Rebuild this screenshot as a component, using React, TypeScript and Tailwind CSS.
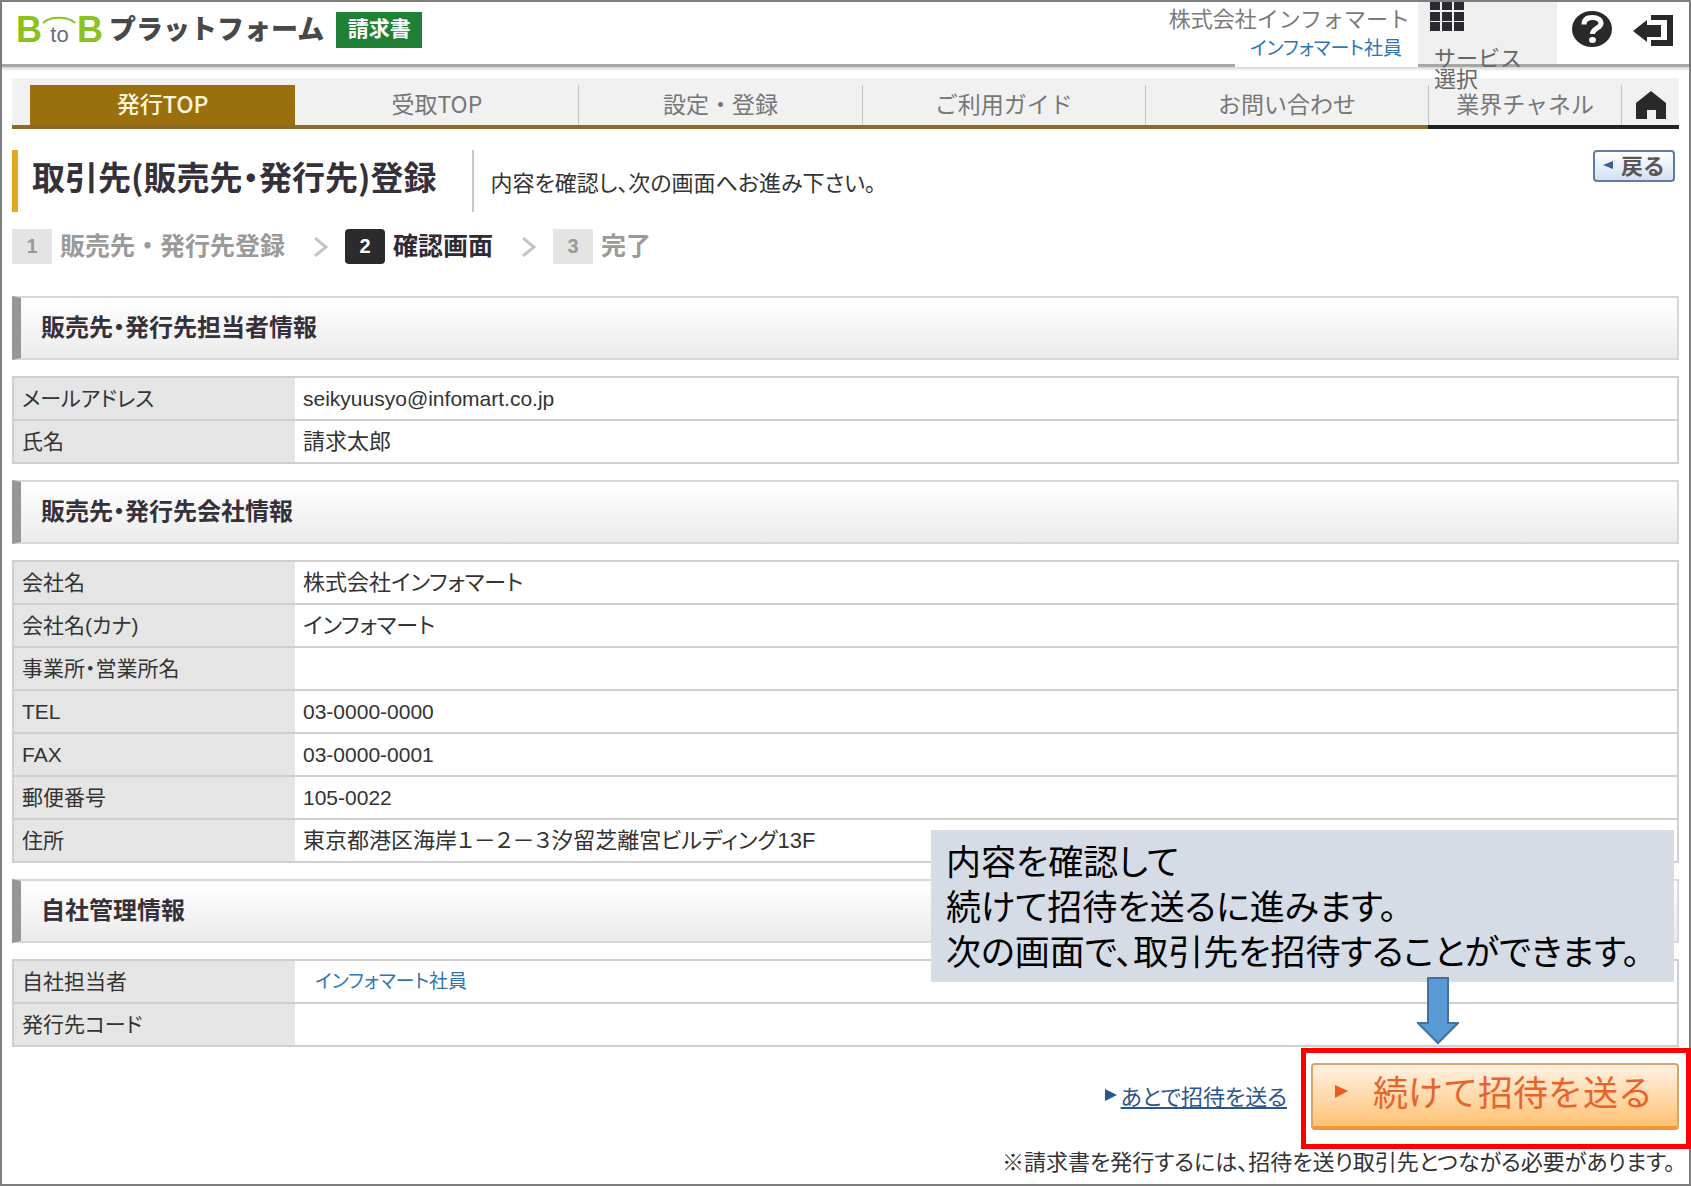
import type { ReactNode } from "react";
import clsx from "clsx";

interface Row {
  label: string;
  value: ReactNode;
}

const tabs = ["発行TOP", "受取TOP", "設定・登録", "ご利用ガイド", "お問い合わせ"];

const steps = ["販売先・発行先登録", "確認画面", "完了"];

const contactRows: Row[] = [
  { label: "メールアドレス", value: <span className="text-[21px]">seikyuusyo@infomart.co.jp</span> },
  { label: "氏名", value: "請求太郎" },
];

const companyRows: Row[] = [
  { label: "会社名", value: "株式会社インフォマート" },
  { label: "会社名(カナ)", value: "インフォマート" },
  { label: "事業所・営業所名", value: "" },
  { label: "TEL", value: <span className="text-[21px]">03-0000-0000</span> },
  { label: "FAX", value: <span className="text-[21px]">03-0000-0001</span> },
  { label: "郵便番号", value: <span className="text-[21px]">105-0022</span> },
  { label: "住所", value: "東京都港区海岸１－２－３汐留芝離宮ビルディング13F" },
];

const ownRows: Row[] = [
  {
    label: "自社担当者",
    value: <span className="pl-3 text-[19px] text-[#2e75b6]">インフォマート社員</span>,
  },
  { label: "発行先コード", value: "" },
];

function Logo() {
  return (
    <a href="#" className="flex items-start">
      <span className="relative mt-1 flex items-baseline font-['Liberation_Sans',sans-serif] leading-9">
        <span className="text-4xl leading-9 font-bold text-[#8cc220]">B</span>
        <span className="w-[35px] text-center text-[22px] leading-9 text-[#6f6a80]">to</span>
        <span className="text-4xl leading-9 font-bold text-[#8cc220]">B</span>
        <svg className="absolute top-0 left-6" width="38" height="14" viewBox="0 0 38 14" fill="none">
          <path d="M3 11C10 4 28 4 35 11" stroke="#8cc220" strokeWidth="2" />
        </svg>
      </span>
      <span className="ml-[6px] text-[27px] leading-10 font-black text-[#484848]">プラットフォーム</span>
      <span className="mt-1 ml-3 flex h-9 w-[86px] items-center justify-center bg-[#1f8036] pb-1 text-[21px] font-bold text-white">
        請求書
      </span>
    </a>
  );
}

function Header() {
  return (
    <header className="relative z-10 flex h-[65px] items-start border-b-[3px] border-[#a6a6a6] shadow-[0_2px_3px_rgba(0,0,0,0.18)]">
      <div className="pt-[6px] pl-[14px]">
        <Logo />
      </div>
      <div className="ml-auto flex flex-col items-end">
        <span className="pt-[3px] pr-2 text-[22px] leading-[24px] text-[#7a7a7a]">株式会社インフォマート</span>
        <span className="flex h-[38px] w-[183px] items-center justify-end bg-white pr-4 pb-[2px] text-[19px] text-[#2e75b6] [font-feature-settings:'palt']">
          インフォマート社員
        </span>
      </div>
      <a href="#" className="h-full w-[139px] bg-[#efefef] pl-3">
        <svg width="34" height="30" viewBox="0 0 34 30" fill="#2c2a30">
          {[0, 12, 24].map((x) =>
            [0, 10, 20].map((y) => <rect key={`${x}-${y}`} x={x} y={y} width="10" height={y === 0 ? 8 : 9} />)
          )}
        </svg>
        <span className="mt-[14px] block w-24 pl-1 text-[22px] leading-[21px] text-[#666]">
          サービス
          <br />
          選択
        </span>
      </a>
      <button type="button" aria-label="ヘルプ" className="mt-2 ml-[15px]">
        <svg width="40" height="38" viewBox="0 0 40 38" fill="none">
          <ellipse cx="20" cy="19" rx="20" ry="18" fill="#2a2828" />
          <path
            d="M12 14.500C12 10 15 7.500 20.500 7.500C26 7.500 29 10 29 13.500C29 18.500 20.500 18 20.500 24"
            stroke="#fff"
            strokeWidth="5"
          />
          <ellipse cx="20.500" cy="30" rx="3.500" ry="3" fill="#fff" />
        </svg>
      </button>
      <button type="button" aria-label="ログアウト" className="mt-3 mr-4 ml-[21px]">
        <svg width="40" height="34" viewBox="0 0 40 34" fill="#2a2828">
          <path d="M0 17L14 6V11H28V23H14V28Z" />
          <path d="M18 1H40V32H18V26H34V6H18Z" />
        </svg>
      </button>
    </header>
  );
}

function Nav() {
  return (
    <nav className="mx-[10px] mt-[11px] flex h-[51px] bg-[#f1f1f1] text-[23px] text-[#777]">
      {tabs.map((tab, i) => (
        <div key={tab} className="flex-1 border-b-4 border-[#8a6a24] pt-[7px]">
          <a
            href="#"
            className={clsx(
              "flex h-full items-center justify-center pb-[3px]",
              i === 0 && "ml-[18px] bg-[#99700d] font-medium text-[#fff6dc]",
              i > 1 && "border-l border-[#c4c4c4]"
            )}
          >
            {tab}
          </a>
        </div>
      ))}
      <div className="w-[193px] border-b-4 border-[#222] pt-[7px]">
        <a href="#" className="flex h-full items-center justify-center border-l border-[#c4c4c4] pb-[3px]">
          業界チャネル
        </a>
      </div>
      <div className="w-[58px] border-b-4 border-[#222] pt-[7px]">
        <a href="#" aria-label="ホーム" className="flex h-full items-center justify-center border-l border-[#c4c4c4]">
          <svg width="32" height="28" viewBox="0 0 32 28" fill="#2a2828">
            <path d="M16 0L31 12V28H21V19H12V28H1V12Z" />
          </svg>
        </a>
      </div>
    </nav>
  );
}

function Steps() {
  return (
    <ol className="mt-[17px] flex h-[35px] items-center text-[25px]">
      {steps.map((step, i) => (
        <li key={step} className="flex items-center">
          {i > 0 && (
            <svg className="mr-4 ml-7" width="16" height="20" viewBox="0 0 16 20" fill="none">
              <path d="M2 1L13 10L2 19" stroke="#c4c4c4" strokeWidth="3" />
            </svg>
          )}
          <span
            className={clsx(
              "mr-2 flex h-[35px] w-10 items-center justify-center pb-[2px] font-['Liberation_Sans',sans-serif] text-xl font-bold",
              i === 1 ? "rounded-sm bg-[#2c2a2c] text-white" : "bg-[#e4e4e4] text-[#999]"
            )}
          >
            {i + 1}
          </span>
          <span className={clsx("pb-[5px] leading-8 font-bold", i === 1 ? "text-[#2f2a35]" : "text-[#9a9a9a]")}>
            {step}
          </span>
        </li>
      ))}
    </ol>
  );
}

function Section({ title, rows }: { title: string; rows: Row[] }) {
  return (
    <section className="flex flex-col gap-4">
      <h2 className="flex h-16 items-center border-2 border-l-[9px] border-[#d8d8d8] border-l-[#969696] bg-linear-to-b from-white to-[#ebebeb] pb-1 pl-5 text-[24px] font-bold text-[#36303a] [font-feature-settings:'palt']">
        {title}
      </h2>
      <table className="w-full border-collapse border-2 border-[#cfcfcf] font-['Liberation_Sans','Noto_Sans_CJK_JP',sans-serif] text-[22px] leading-7 text-[#333] [font-feature-settings:'palt']">
        <tbody>
          {rows.map((row) => (
            <tr key={row.label} className="h-[43px] border-b-2 border-[#cfcfcf]">
              <th scope="row" className="w-[282px] bg-[#e5e5e5] pl-2 text-left text-[21px] font-normal">
                {row.label}
              </th>
              <td className="pl-2">{row.value}</td>
            </tr>
          ))}
        </tbody>
      </table>
    </section>
  );
}

function Callout() {
  return (
    <div className="absolute right-[5px] bottom-[65px] h-[152px] w-[743px] bg-[#d6dce5] pt-[7px] pl-[15px] text-[35px] leading-[45px] whitespace-nowrap text-black [font-feature-settings:'palt']">
      <p>内容を確認して</p>
      <p>続けて招待を送るに進みます。</p>
      <p>次の画面で、取引先を招待することができます。</p>
      <svg className="absolute top-[147px] right-[215px]" width="42" height="68" viewBox="0 0 42 68">
        <path d="M11 1H31V46H41L21 66L1 46H11Z" fill="#5b9bd5" stroke="#41719c" strokeWidth="2" />
      </svg>
    </div>
  );
}

export default function App() {
  return (
    <div className="min-h-screen border-2 border-[#7f7f7f] bg-white font-['Noto_Sans_CJK_JP',sans-serif]">
      <Header />
      <Nav />

      <main className="mx-[10px] mt-[21px]">
        <div className="flex h-[62px] items-start">
          <h1 className="flex h-full items-center border-l-[6px] border-[#e3a820] pb-2 pl-[14px] text-[33px] font-bold text-[#36303a] [font-feature-settings:'palt']">
            取引先(販売先・発行先)登録
          </h1>
          <p className="ml-9 flex h-full items-center border-l-2 border-[#c8c8c8] pl-4 text-[22px] text-[#333] [font-feature-settings:'palt']">
            内容を確認し、次の画面へお進み下さい。
          </p>
          <button
            type="button"
            className="mr-1 ml-auto flex h-8 w-[82px] items-center justify-center gap-2 rounded-sm border-2 border-[#5f7ba6] bg-linear-to-b from-white to-[#d3e0f2] pb-[3px] text-[22px] font-bold text-[#5a5656]"
          >
            <svg width="10" height="8" viewBox="0 0 10 8" fill="#3d5f8f">
              <path d="M0 4L10 0V8Z" />
            </svg>
            戻る
          </button>
        </div>

        <Steps />

        <div className="relative mt-8 flex flex-col gap-4">
          <Section title="販売先・発行先担当者情報" rows={contactRows} />
          <Section title="販売先・発行先会社情報" rows={companyRows} />
          <Section title="自社管理情報" rows={ownRows} />
          <Callout />
        </div>

        <div className="mt-4 flex items-center justify-end">
          <a href="#" className="mr-6 flex items-center gap-1 pb-1 text-[22px] leading-7 text-[#2a5590]">
            <svg width="12" height="12" viewBox="0 0 12 12" fill="#2a5590">
              <path d="M0 0L12 6L0 12Z" />
            </svg>
            <span className="underline [font-feature-settings:'palt']">あとで招待を送る</span>
          </a>
          <div className="relative">
            <button
              type="button"
              className="flex h-[67px] w-[368px] items-center rounded-sm border-2 border-b-4 border-[#d9a36a] border-b-[#ee9638] bg-linear-to-b from-[#fff1e2] to-[#fdc271] pb-2 pl-[22px] text-[35px] text-[#e8632a]"
            >
              <svg className="mr-[25px]" width="13" height="13" viewBox="0 0 13 13" fill="#ee5a1c">
                <path d="M0 0L13 6L0 13Z" />
              </svg>
              続けて招待を送る
            </button>
            {/* highlight frame */}
            <div className="pointer-events-none absolute -top-[15px] -right-3 -bottom-[19px] -left-[10px] border-5 border-[#ff0000]" />
          </div>
        </div>

        <p className="mt-4 mr-1 text-right text-[22px] leading-7 text-[#333] [font-feature-settings:'palt']">
          ※請求書を発行するには、招待を送り取引先とつながる必要があります。
        </p>
      </main>
    </div>
  );
}
